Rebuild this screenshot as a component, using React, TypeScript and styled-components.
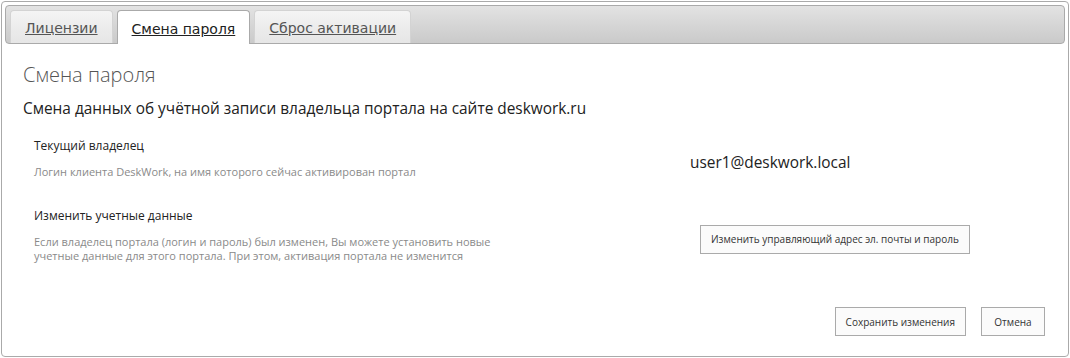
import styled, { createGlobalStyle } from 'styled-components'

const GlobalStyle = createGlobalStyle`
  html, body {
    margin: 0;
    padding: 0;
    background: #ffffff;
  }
  body {
    font-family: "Open Sans", "Noto Sans", sans-serif;
  }
`

const StyledWidget = styled.div`
  box-sizing: border-box;
  width: 1068px;
  height: 356px;
  margin: 1px 0 0 1px;
  padding: 3px;
  border: 1px solid #aaaaaa;
  border-radius: 4px;
  background: #ffffff;
  display: flex;
  flex-direction: column;
`
const StyledTabBar = styled.ul`
  box-sizing: border-box;
  height: 39px;
  margin: 0;
  padding: 5px 4px 0;
  list-style: none;
  display: flex;
  align-items: flex-end;
  gap: 4px;
  border: 1px solid #aaaaaa;
  border-radius: 4px;
  background: linear-gradient(to bottom, #e3e3e3 0%, #d6d6d6 50%, #cacaca 100%);
`
const StyledTab = styled.li<{ $active?: boolean }>`
  box-sizing: border-box;
  height: ${p => (p.$active ? '34px' : '33px')};
  margin-bottom: ${p => (p.$active ? '-1px' : '0')};
  padding: 0 14px;
  display: flex;
  align-items: center;
  border: 1px solid ${p => (p.$active ? '#aaaaaa' : '#d3d3d3')};
  border-bottom: none;
  border-radius: 4px 4px 0 0;
  background: ${p => (p.$active
    ? '#ffffff'
    : 'linear-gradient(to bottom, #f4f4f4 0%, #ececec 50%, #e6e6e6 100%)')};
  & a {
    font-family: "DejaVu Sans", Verdana, sans-serif;
    font-size: 14px;
    color: ${p => (p.$active ? '#212121' : '#555555')};
    text-decoration: underline;
    padding-top: 2px;
  }
`
const StyledPanel = styled.div`
  padding: 18px 18px 0;
  flex: 1;
  display: flex;
  flex-direction: column;
`
const StyledTitle = styled.h2`
  margin: 0;
  font-size: 20px;
  font-weight: 300;
  color: #555555;
  line-height: 26px;
`
const StyledLead = styled.h4`
  margin: 11px 0 0;
  font-size: 15.4px;
  font-weight: 400;
  color: #222222;
  line-height: 20px;
`
const StyledRow = styled.div<{ $top: number }>`
  margin-top: ${p => p.$top}px;
  display: flex;
  align-items: center;
`
const StyledRowInfo = styled.div`
  width: 667px;
  flex-shrink: 0;
  padding-left: 11px;
  box-sizing: border-box;
`
const StyledRowAction = styled.div<{ $shift?: number }>`
  padding: 8px 0 0 ${p => p.$shift ?? 0}px;
`
const StyledLabel = styled.div`
  font-size: 12px;
  color: #222222;
  line-height: 18px;
`
const StyledHint = styled.div`
  margin-top: 10px;
  font-size: 11px;
  color: #8a8a8a;
  line-height: 14px;
  max-width: 480px;
`
const StyledValue = styled.div`
  font-size: 15.4px;
  color: #222222;
`
const StyledButton = styled.button<{ $min?: number }>`
  height: 29px;
  min-width: ${p => p.$min ?? 0}px;
  padding: 0 10px;
  border: 1px solid #aaaaaa;
  background: #fbfbfb;
  font-family: "Open Sans", "Noto Sans", sans-serif;
  font-size: 10px;
  color: #333333;
  cursor: pointer;
`
const StyledFooter = styled.div`
  margin-top: auto;
  padding: 0 2px 17px 0;
  display: flex;
  justify-content: flex-end;
  gap: 15px;
`

const tabs = ['Лицензии', 'Смена пароля', 'Сброс активации']

function App() {
  return (
    <>
      <GlobalStyle />
      <StyledWidget>
        <StyledTabBar>
          {tabs.map((t, i) => (
            <StyledTab key={t} $active={i === 1}>
              <a>{t}</a>
            </StyledTab>
          ))}
        </StyledTabBar>
        <StyledPanel>
          <StyledTitle>Смена пароля</StyledTitle>
          <StyledLead>Смена данных об учётной записи владельца портала на сайте deskwork.ru</StyledLead>
          <StyledRow $top={18}>
            <StyledRowInfo>
              <StyledLabel>Текущий владелец</StyledLabel>
              <StyledHint>Логин клиента DeskWork, на имя которого сейчас активирован портал</StyledHint>
            </StyledRowInfo>
            <StyledRowAction>
              <StyledValue>user1@deskwork.local</StyledValue>
            </StyledRowAction>
          </StyledRow>
          <StyledRow $top={28}>
            <StyledRowInfo>
              <StyledLabel>Изменить учетные данные</StyledLabel>
              <StyledHint>
                Если владелец портала (логин и пароль) был изменен, Вы можете установить новые
                учетные данные для этого портала. При этом, активация портала не изменится
              </StyledHint>
            </StyledRowInfo>
            <StyledRowAction $shift={10}>
              <StyledButton>Изменить управляющий адрес эл. почты и пароль</StyledButton>
            </StyledRowAction>
          </StyledRow>
          <StyledFooter>
            <StyledButton>Сохранить изменения</StyledButton>
            <StyledButton $min={64}>Отмена</StyledButton>
          </StyledFooter>
        </StyledPanel>
      </StyledWidget>
    </>
  )
}

export default App
